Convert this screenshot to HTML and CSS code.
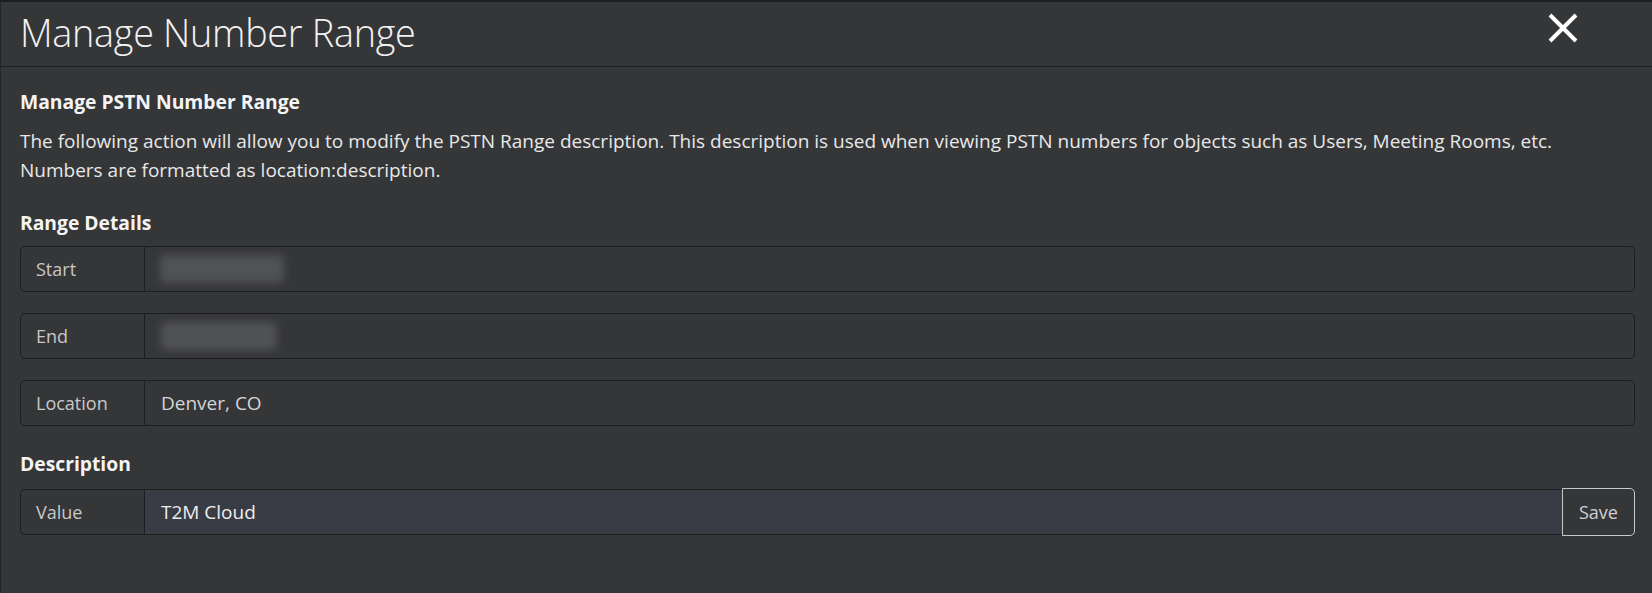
FILE: index.html
```html
<!DOCTYPE html>
<html lang="en">
<head>
<meta charset="utf-8">
<title>Manage Number Range</title>
<link rel="stylesheet" href="styles.css">
</head>
<body>
<div class="modal">
  <div class="modal-header">
    <h1 class="modal-title">Manage Number Range</h1>
    <button class="close" type="button" aria-label="Close">
      <svg width="32" height="32" viewBox="0 0 32 32"><path d="M3 3 L29 29 M29 3 L3 29" stroke="#ffffff" stroke-width="4" stroke-linecap="butt" fill="none"/></svg>
    </button>
  </div>
  <div class="modal-body">
    <h2 class="section-title">Manage PSTN Number Range</h2>
    <p class="intro">The following action will allow you to modify the PSTN Range description. This description is used when viewing PSTN numbers for objects such as Users, Meeting Rooms, etc.<br>Numbers are formatted as location:description.</p>

    <div class="group group-range">
      <h3 class="group-title">Range Details</h3>
      <div class="field">
        <span class="field-label">Start</span>
        <div class="field-value"><span class="redacted redacted-start"></span></div>
      </div>
      <div class="field">
        <span class="field-label">End</span>
        <div class="field-value"><span class="redacted redacted-end"></span></div>
      </div>
      <div class="field">
        <span class="field-label">Location</span>
        <div class="field-value">Denver, CO</div>
      </div>
    </div>

    <div class="group group-desc">
      <h3 class="group-title">Description</h3>
      <div class="field field-edit">
        <span class="field-label">Value</span>
        <input class="field-input" type="text" value="T2M Cloud">
        <button class="save" type="button">Save</button>
      </div>
    </div>
  </div>
</div>
</body>
</html>
```
FILE: styles.css
```css
html, body {
  margin: 0;
  padding: 0;
  background: #353638;
  height: 100%;
}
body {
  font-family: "Segoe UI", "Open Sans", "Noto Sans", sans-serif;
  color: #e6e6e6;
}
.modal {
  box-sizing: border-box;
  min-height: 100%;
  background: #353638;
  border-top: 2px solid #1c1d1f;
  border-left: 1px solid #232426;
}
.modal-header {
  display: flex;
  align-items: flex-start;
  justify-content: space-between;
  padding: 9px 0 11px 19px;
  border-bottom: 1px solid #1e1f21;
}
.modal-title {
  margin: 0;
  font-size: 37.8px;
  font-weight: 300;
  line-height: 44px;
  color: #f2f2f2;
  letter-spacing: -0.3px;
}
.close {
  background: none;
  border: 0;
  padding: 0;
  margin: 1px 73px 0 0;
  width: 32px;
  height: 32px;
  cursor: pointer;
}
.close svg { display: block; }

.modal-body {
  padding: 22px 17px 0 19px;
}
.section-title {
  margin: 0;
  font-size: 19.3px;
  font-weight: 700;
  line-height: 26px;
  color: #f4f4f4;
}
.intro {
  margin: 12px 0 0;
  font-size: 19px;
  line-height: 29px;
  color: #e8e8e8;
}
.group {
  display: flex;
  flex-direction: column;
  gap: 21px;
  margin-top: 23px;
}
.group-desc { margin-top: 25px; }
.group-title {
  margin: 0 0 -9px;
  font-size: 19.3px;
  font-weight: 700;
  line-height: 26px;
  color: #f4f4f4;
}
.group-range .group-title {
  margin: 2px 0 -11px;
}
.field {
  display: flex;
  height: 46px;
  box-sizing: border-box;
  border: 1px solid #1d1e21;
  border-radius: 5px;
  font-size: 19px;
  color: #cfcfcf;
}
.field-label {
  display: flex;
  align-items: center;
  box-sizing: border-box;
  width: 124px;
  padding-left: 15px;
  border-right: 1px solid #1d1e21;
  color: #c8c8c8;
  font-size: 18px;
  flex: none;
}
.field-value {
  display: flex;
  align-items: center;
  flex: 1;
  padding-left: 16px;
  color: #d4d4d4;
}
.redacted {
  display: block;
  height: 28px;
  background: #515254;
  filter: blur(4px);
  border-radius: 4px;
}
.redacted-start { width: 124px; margin-left: -1px; }
.redacted-end { width: 116px; }

.field-edit {
  border-right: 0;
  border-radius: 5px;
}
.field-input {
  flex: 1;
  min-width: 0;
  box-sizing: border-box;
  height: 44px;
  border: 0;
  margin: 0;
  padding: 0 0 0 16px;
  background: #393c45;
  color: #ededed;
  font-family: inherit;
  font-size: 19px;
  outline: none;
}
.save {
  flex: none;
  box-sizing: border-box;
  width: 73px;
  height: 48px;
  margin: -2px 0 -2px 0;
  border: 1px solid #c9c9c9;
  border-radius: 0 5px 5px 0;
  background: #353638;
  color: #d0d0d0;
  font-family: inherit;
  font-size: 18px;
  padding: 0;
  cursor: pointer;
}
```
